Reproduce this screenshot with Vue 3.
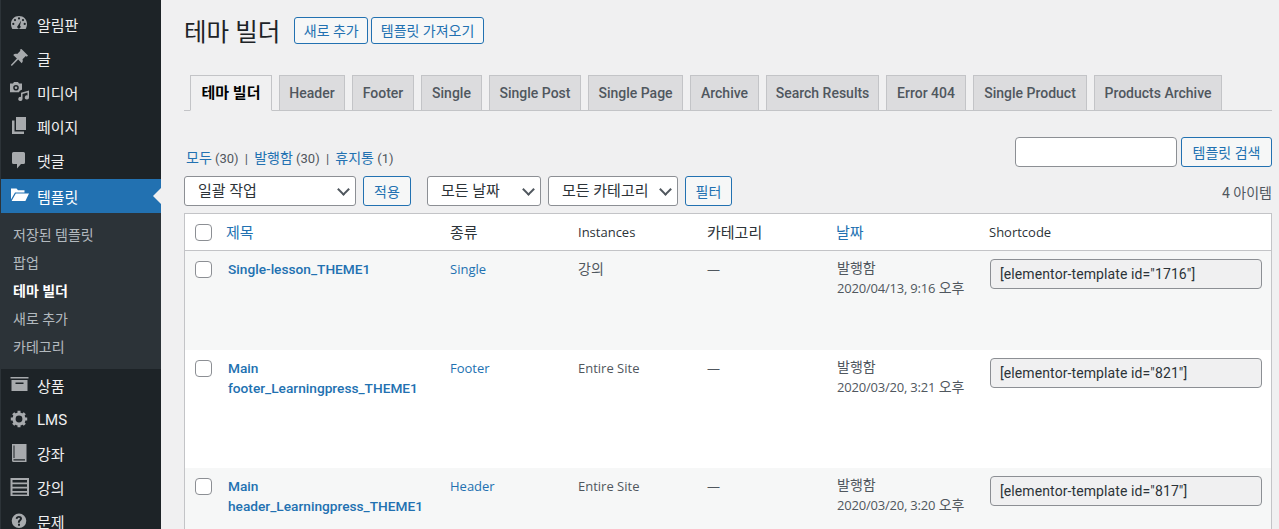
<script setup>
const menuTop = [
  { label: '알림판', icon: 'dash' },
  { label: '글', icon: 'pin' },
  { label: '미디어', icon: 'media' },
  { label: '페이지', icon: 'page' },
  { label: '댓글', icon: 'comment' },
]
const menuBottom = [
  { label: '상품', icon: 'archive' },
  { label: 'LMS', icon: 'gear' },
  { label: '강좌', icon: 'book' },
  { label: '강의', icon: 'list' },
  { label: '문제', icon: 'help' },
]
const subs = ['저장된 템플릿', '팝업', '테마 빌더', '새로 추가', '카테고리']
const tabs = [
  { t: '테마 빌더', w: 82 }, { t: 'Header', w: 66 }, { t: 'Footer', w: 62 }, { t: 'Single', w: 61 },
  { t: 'Single Post', w: 92 }, { t: 'Single Page', w: 95 }, { t: 'Archive', w: 69 },
  { t: 'Search Results', w: 113 }, { t: 'Error 404', w: 80 }, { t: 'Single Product', w: 114 },
  { t: 'Products Archive', w: 128 },
]
const rows = [
  { title: ['Single-lesson_THEME1'], type: 'Single', inst: '강의', ko: true, date: '2020/04/13, 9:16', id: 1716, cls: 'r1' },
  { title: ['Main', 'footer_Learningpress_THEME1'], type: 'Footer', inst: 'Entire Site', ko: false, date: '2020/03/20, 3:21', id: 821, cls: 'r2' },
  { title: ['Main', 'header_Learningpress_THEME1'], type: 'Header', inst: 'Entire Site', ko: false, date: '2020/03/20, 3:20', id: 817, cls: 'r3' },
]
</script>

<template>
  <div class="page">
    <aside class="side">
      <div v-for="m in menuTop" :key="m.label" class="mi top">
        <span class="ic"><svg viewBox="0 0 20 20" width="20" height="20">
          <path v-if="m.icon === 'dash'" fill-rule="evenodd" d="M9 2C4.400 2 1 5.500 1 10c0 1.800.5 3.500 1.300 5h13.400c.8-1.500 1.300-3.200 1.300-5 0-4.500-3.400-8-8-8zM9 3.300a1.100 1.100 0 110 2.200 1.100 1.100 0 010-2.200zM5 5a1.100 1.100 0 110 2.200A1.100 1.100 0 015 5zm8 0a1.100 1.100 0 110 2.200A1.100 1.100 0 0113 5zM3.300 8.800a1.100 1.100 0 110 2.200 1.100 1.100 0 010-2.200zm11.400 0a1.100 1.100 0 110 2.200 1.100 1.100 0 010-2.200zM11.200 6.500L10 11.600a1.700 1.700 0 11-2-.1z"/>
          <path v-else-if="m.icon === 'pin'" d="M11.500 1l6.500 6.500-1.200 1.200-1-.6-3.300 3.100c.6 1.500.2 2.900-.8 4L8.200 11.500 1.800 18l-1-.9 6.100-6.500-3.700-3.700c1.100-1 2.500-1.400 4-.8l3.200-3.300-.6-1z"/>
          <path v-else-if="m.icon === 'media'" fill-rule="evenodd" d="M0 1.500h3L4 0h4l1 1.500h3v6.300c-1.500.3-2.500 1.200-3 2.500H0zM6 3a2.800 2.800 0 100 5.600A2.800 2.800 0 006 3zm0 1.500a1.300 1.300 0 110 2.600 1.300 1.300 0 010-2.600zM11 10.800l8-2.300v7a2.100 2.100 0 11-1.500-2v-3l-5 1.500v5a2.100 2.100 0 11-1.500-2z"/>
          <path v-else-if="m.icon === 'page'" d="M6 1h10v13H6zM2 4.500h2.500V15.500H14V18H2z"/>
          <path v-else-if="m.icon === 'comment'" d="M3.500 2h10A1.500 1.500 0 0115 3.500v9a1.500 1.500 0 01-1.500 1.500H11l-4 4.500V14H3.500A1.500 1.500 0 012 12.500v-9A1.500 1.500 0 013.500 2z"/>
        </svg></span>
        <span class="ml">{{ m.label }}</span>
      </div>
      <div class="mi active">
        <span class="ic"><svg viewBox="0 0 20 20" width="20" height="20"><path d="M1 3.500h5.500L8 5.300h6.500V7.500H5L1 14.500zM5.800 8.500H19l-3.600 7.500H1.600z"/></svg></span>
        <span class="ml">템플릿</span>
      </div>
      <div class="sub">
        <div v-for="s in subs" :key="s" class="si" :class="{ cur: s === '테마 빌더' }">{{ s }}</div>
      </div>
      <div v-for="m in menuBottom" :key="m.label" class="mi bot">
        <span class="ic"><svg viewBox="0 0 20 20" width="20" height="20">
          <path v-if="m.icon === 'archive'" fill-rule="evenodd" d="M0.500 2h18v1.500h-18zM1.500 5h16v11h-16zM5.500 7.500v1.500h8V7.500z"/>
          <g v-else-if="m.icon === 'gear'">
            <circle cx="9" cy="10" r="5" fill="none" stroke="currentColor" stroke-width="3.200"/>
            <path stroke="currentColor" stroke-width="3" d="M9 1.800v3M9 15.200v3M.8 10h3M14.200 10h3M3.200 4.200l2.200 2.200M12.600 13.600l2.200 2.200M14.800 4.200l-2.200 2.200M5.400 13.600l-2.200 2.200"/>
          </g>
          <path v-else-if="m.icon === 'book'" fill-rule="evenodd" d="M2 1h14.500v18H3.500A1.500 1.500 0 012 17.500zM3.500 2.500V15h1V2.500zM3.500 16.200v1.300h11.500v-1.300z"/>
          <path v-else-if="m.icon === 'list'" fill-rule="evenodd" d="M0.500 1h18.500v18H0.500zM2.500 3v2.500h14.500V3zm0 4.300v2.500h14.500V7.300zm0 4.200V14h14.500v-2.500zm0 4.300v1.700h14.500v-1.700z"/>
          <path v-else-if="m.icon === 'help'" fill-rule="evenodd" d="M9 2.500a7.300 7.300 0 110 14.600A7.300 7.300 0 019 2.500zM8.900 5c-1.800 0-3.100.9-3.200 2.700l1.800.3c.1-.9.6-1.300 1.300-1.300s1.200.3 1.200.9c0 1.200-2.100 1.400-2.100 3.600v.5h1.900v-.4c0-1.400 2.200-1.600 2.200-3.800C12 5.800 10.600 5 8.900 5zM8 12.800v2h2v-2z"/>
        </svg></span>
        <span class="ml">{{ m.label }}</span>
      </div>
    </aside>

    <main class="main">
      <header class="head">
        <h1>테마 빌더</h1>
        <a class="btn">새로 추가</a>
        <a class="btn">템플릿 가져오기</a>
      </header>

      <nav class="tabs">
        <a v-for="(t, i) in tabs" :key="t.t" class="tab" :class="{ on: i === 0 }" :style="{ width: t.w + 'px' }">{{ t.t }}</a>
      </nav>

      <div class="filters-top">
        <div class="views">
          <a>모두</a> (30) <i>|</i> <a>발행함</a> (30) <i>|</i> <a>휴지통</a> (1)
        </div>
        <div class="search">
          <input class="sbox" type="text" />
          <a class="btn tall sbtn">템플릿 검색</a>
        </div>
      </div>

      <div class="actions">
        <div class="sel w172">일괄 작업</div>
        <a class="btn tall">적용</a>
        <div class="sel w114 sp">모든 날짜</div>
        <div class="sel w130">모든 카테고리</div>
        <a class="btn tall narrow">필터</a>
        <span class="count">4 아이템</span>
      </div>

      <table class="tbl">
        <colgroup>
          <col class="c0" /><col class="c1" /><col class="c2" /><col class="c3" /><col class="c4" /><col class="c5" /><col />
        </colgroup>
        <thead>
          <tr>
            <th class="chk"><span class="cb"></span></th>
            <th><a class="sortl">제목</a></th>
            <th>종류</th>
            <th class="lat">Instances</th>
            <th>카테고리</th>
            <th><a>날짜</a></th>
            <th class="lat">Shortcode</th>
          </tr>
        </thead>
        <tbody>
          <tr v-for="r in rows" :key="r.id" :class="r.cls">
            <td class="chk"><span class="cb"></span></td>
            <td class="ttl"><a v-for="l in r.title" :key="l">{{ l }}</a></td>
            <td><a class="lnk">{{ r.type }}</a></td>
            <td :class="{ ko: r.ko }">{{ r.inst }}</td>
            <td>—</td>
            <td class="dt"><b>발행함</b><br /><span class="num">{{ r.date }}</span> <b>오후</b></td>
            <td class="sc"><div class="code">[elementor-template id="{{ r.id }}"]</div></td>
          </tr>
        </tbody>
      </table>
    </main>
  </div>
</template>

<style>
html, body { margin: 0; overflow: hidden; height: 529px; background: #f0f0f1; }
</style>

<style scoped>
.page { display: flex; width: 1279px; height: 529px; overflow: hidden; background: #f0f0f1; color: #3c434a; font-family: Roboto, "Noto Sans CJK KR", sans-serif; font-size: 13px; }
.side { width: 161px; flex: none; background: #1d2327; border-left: 1px solid #2c3338; height: 529px; padding-top: 9px; box-sizing: border-box; color: #f0f0f1; }
.mi { height: 34px; display: flex; align-items: center; position: relative; font-size: 15px; }
.ic { width: 36px; height: 34px; display: flex; align-items: center; padding-left: 9px; box-sizing: border-box; color: #a7aaad; flex: none; }
.top .ic { padding-bottom: 5px; }
.bot .ic { padding-bottom: 2px; }
.active .ic { padding-bottom: 3px; }
.top .ml { padding-bottom: 3px; }
.bot .ml { padding-bottom: 1px; }
.ic svg { fill: currentColor; }
.ml { color: #f0f0f1; }
.active { background: #2271b1; }
.active .ic, .active .ml { color: #fff; }
.active::after { content: ""; position: absolute; right: 0; top: 9px; border: 8px solid transparent; border-right-color: #f0f0f1; }
.sub { background: #2c3338; height: 156px; padding-top: 8px; box-sizing: border-box; }
.si { height: 28px; line-height: 28px; padding-left: 12px; font-size: 14px; color: rgba(240, 246, 252, .7); }
.si.cur { color: #fff; font-weight: 700; }
.main { flex: 1; min-width: 0; padding: 0 7px 0 23px; box-sizing: border-box; }
.head { display: flex; align-items: center; height: 60px; }
h1 { margin: 0 14px 0 0; font-size: 24.5px; font-weight: 400; color: #1d2327; }
.btn { display: inline-flex; align-items: center; justify-content: center; height: 27px; padding: 0 8.5px; border: 1px solid #2271b1; border-radius: 3px; background: #f6f7f7; color: #2271b1; font-size: 14px; box-sizing: border-box; margin-right: 3px; }
.btn.tall { height: 30px; margin: 0; }
.tabs { display: flex; gap: 7px; padding: 15px 0 0 6px; height: 51px; box-sizing: border-box; border-bottom: 1px solid #c3c4c7; }
.tab { height: 36px; box-sizing: border-box; border: 1px solid #c3c4c7; background: #dcdcde; color: #50575e; font-size: 14px; font-weight: 500; text-align: center; line-height: 35px; white-space: nowrap; }
.tab.on { background: #f0f0f1; color: #000; border-bottom-color: #f0f0f1; font-size: 15px; font-weight: 700; }
.filters-top { display: flex; justify-content: space-between; align-items: flex-end; margin-top: 26px; height: 30px; }
.views { padding-left: 2px; color: #50575e; height: 22px; line-height: 26px; }
.views a { color: #2271b1; font-size: 14px; }
.views i { font-style: normal; color: #50575e; margin: 0 3px; }
.search { display: flex; gap: 4px; }
.sbtn { width: 91px; padding: 0; }
.sbox { width: 162px; height: 30px; box-sizing: border-box; border: 1px solid #8c8f94; border-radius: 4px; background: #fff; }
.actions { display: flex; align-items: center; margin-top: 9px; height: 30px; }
.actions .btn { width: 48px; padding: 0; margin-left: 7px; }
.actions .btn.narrow { width: 47px; }
.sel { height: 30px; box-sizing: border-box; border: 1px solid #8c8f94; border-radius: 3px; background: #fff; color: #2c3338; font-size: 15px; line-height: 28px; padding-left: 13px; position: relative; white-space: nowrap; }
.sel::after { content: ""; position: absolute; right: 7px; top: 8px; width: 7px; height: 7px; border-right: 2px solid #50575e; border-bottom: 2px solid #50575e; transform: rotate(45deg); }
.w172 { width: 172px; }
.w114 { width: 114px; }
.w130 { width: 130px; margin-left: 7px; }
.sp { margin-left: 16px; }
.count { margin-left: auto; color: #50575e; font-size: 14px; padding-top: 2px; }
.tbl { margin-top: 7px; width: 1088px; table-layout: fixed; border-collapse: separate; border-spacing: 0; border: 1px solid #c3c4c7; border-bottom: 0; background: #fff; }
.c0 { width: 34px; } .c1 { width: 223px; } .c2 { width: 128px; } .c3 { width: 129px; } .c4 { width: 129px; } .c5 { width: 153px; }
th { height: 37px; padding: 0 0 2px 8px; text-align: left; font-weight: 400; font-size: 15px; color: #2c3338; border-bottom: 1px solid #c3c4c7; box-sizing: border-box; }
th.lat { font-family: "Open Sans", sans-serif; font-size: 13px; padding-bottom: 0; }
th.chk { padding: 0 0 0 10px; }
th a { color: #2271b1; }
.sortl { margin-left: -1px; }
td { vertical-align: top; padding: 8px 0 0 8px; color: #50575e; font-family: "Open Sans", "Noto Sans CJK KR", sans-serif; font-size: 13px; line-height: 20px; box-sizing: border-box; }
td.ko { font-size: 14px; }
.r1 td { height: 99px; background: #f6f7f7; }
.r2 td { height: 118px; background: #fff; }
.r3 td { height: 100px; background: #f6f7f7; }
td.chk { padding: 10px 0 0 10px; }
.cb { display: block; width: 17px; height: 17px; box-sizing: border-box; border: 1px solid #8c8f94; border-radius: 4px; background: #fff; }
td.ttl { padding-left: 9px; font-family: Roboto, sans-serif; }
.ttl a { display: block; color: #2271b1; font-weight: 500; font-size: 13.7px; }
.lnk { color: #2271b1; }
td.dt { padding: 7px 0 0 9px; white-space: nowrap; }
.dt b { font-weight: 400; font-size: 14px; }
.num { letter-spacing: -.2px; }
td.sc { padding: 8px 9px 0 9px; }
.code { height: 30px; box-sizing: border-box; border: 1px solid #8c8f94; border-radius: 4px; background: #f0f0f1; color: #2c3338; font-family: Roboto, sans-serif; font-size: 14px; letter-spacing: .1px; line-height: 28px; padding-left: 9px; white-space: nowrap; }
</style>
